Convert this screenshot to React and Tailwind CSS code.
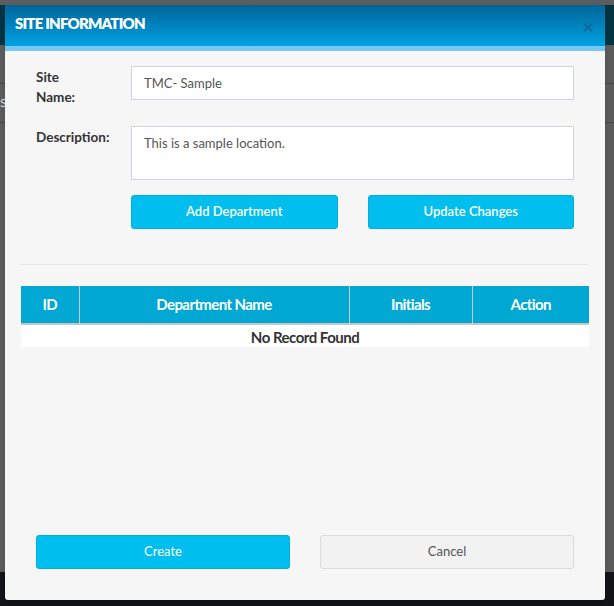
import React from 'react'

const font = { fontFamily: '"Lato", "Noto Sans", sans-serif' }

function Backdrop() {
  return (
    <div className="flex h-[606px] w-[614px] flex-col bg-[#5b5b5b]">
      <div className="h-[5px] bg-[#5c5c5c]" />
      <div className="h-[40px] bg-[#013440]" />
      <div className="h-[38px]" />
      <div className="h-px bg-[#444]" />
      <div className="flex h-[38px] items-center text-[12px] text-[#ddd]">S</div>
      <div className="h-px bg-[#444]" />
      <div className="flex-1" />
      <div className="h-[34px] bg-[#111318]" />
    </div>
  )
}

export default function App() {
  return (
    <div className="relative h-[606px] w-[614px] overflow-hidden" style={font}>
      <Backdrop />

      <div className="absolute left-[5px] top-[5px] flex h-[595px] w-[600px] flex-col overflow-hidden rounded-b-[3px] bg-[#f6f6f6] shadow">
        <div className="relative flex h-[41px] items-center bg-gradient-to-b from-[#00659a] to-[#00a2e3] pb-[4px] pl-[10px]">
          <h2 className="text-[15px] font-extrabold tracking-[-0.8px] text-white">SITE INFORMATION</h2>
          <span className="absolute right-[11px] top-[11px] text-[20px] leading-none text-[#17628c]">×</span>
        </div>
        <div className="h-[5px] bg-[#75c8f1]" />

        <div className="flex flex-1 flex-col">
          <div className="px-[31px] pt-[15px]">
            <div className="flex">
              <label className="w-[95px] pt-[1px] text-[13.5px] font-bold leading-[20px] text-[#333]">
                Site<br />Name:
              </label>
              <input
                readOnly
                value="TMC- Sample"
                className="h-[34px] flex-1 border border-[#cfd4dc] bg-white px-[12px] text-[13px] text-[#555] outline-none"
              />
            </div>

            <div className="mt-[19px] flex">
              <label className="w-[95px] pt-[1px] text-[13.5px] font-bold leading-[20px] text-[#333]">Description:</label>
              <textarea
                readOnly
                value="This is a sample location."
                className="h-[54px] flex-1 resize-none border border-[#cfd4dc] bg-white px-[12px] py-[7px] text-[13px] text-[#555] outline-none"
              />
            </div>

            <div className="mt-[15px] flex gap-[30px] pl-[95px]">
              <button className="h-[34px] flex-1 rounded-[3px] border border-[#00b0e2] bg-[#00bfee] text-[13px] font-semibold text-white">
                Add Department
              </button>
              <button className="h-[34px] flex-1 rounded-[3px] border border-[#00b0e2] bg-[#00bfee] text-[13px] font-semibold text-white">
                Update Changes
              </button>
            </div>
          </div>

          <div className="mx-[16px] mt-[35px] h-px bg-[#e6e6e6]" />

          <div className="mx-[16px] mt-[21px]">
            <table className="w-full border-collapse">
              <thead>
                <tr className="h-[38px] bg-[#00a8d3] text-[15px] font-extrabold tracking-[-0.6px] text-white">
                  <th className="w-[58px] border-r border-[#c9c9c9]">ID</th>
                  <th className="w-[270px] border-r border-[#c9c9c9]">Department Name</th>
                  <th className="w-[123px] border-r border-[#c9c9c9]">Initials</th>
                  <th>Action</th>
                </tr>
              </thead>
              <tbody>
                <tr className="border-t-2 border-[#c6c6c6] bg-white">
                  <td colSpan={4} className="h-[23px] pt-[1px] text-center text-[15px] font-bold leading-[20px] tracking-[-0.5px] text-[#333]">
                    No Record Found
                  </td>
                </tr>
              </tbody>
            </table>
          </div>

          <div className="flex-1" />

          <div className="flex gap-[30px] px-[31px] pb-[31px]">
            <button className="h-[34px] flex-1 rounded-[3px] border border-[#00b0e2] bg-[#00bfee] text-[13px] text-white">
              Create
            </button>
            <button className="h-[34px] flex-1 rounded-[3px] border border-[#dcdcdc] bg-[#f2f2f2] text-[13px] text-[#555]">
              Cancel
            </button>
          </div>
        </div>
      </div>
    </div>
  )
}
